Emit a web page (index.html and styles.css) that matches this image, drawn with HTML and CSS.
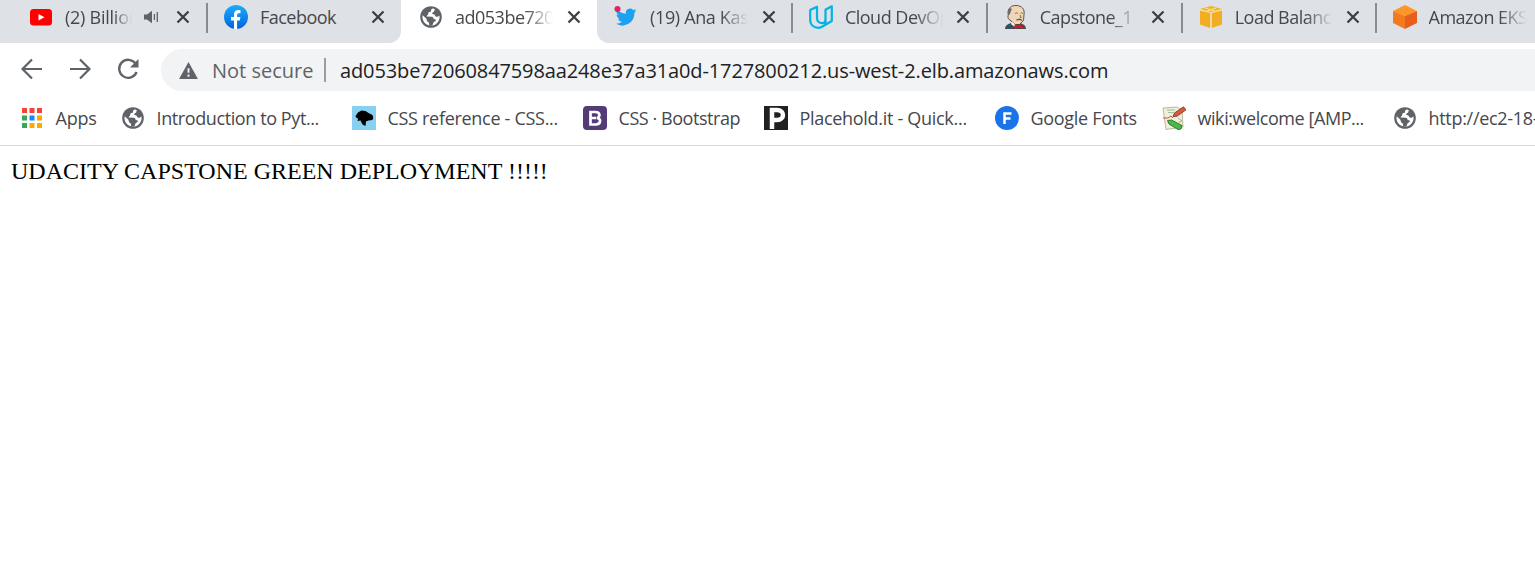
FILE: index.html
```html
<!DOCTYPE html>
<html lang="en">
<head>
<meta charset="utf-8">
<title>Udacity Capstone</title>
<link rel="stylesheet" href="styles.css">
</head>
<body>
<svg class="defs" width="0" height="0" aria-hidden="true">
  <symbol id="x" viewBox="0 0 14 14"><path d="M1.500 1.500l11 11M12.500 1.500l-11 11" fill="none" stroke="#3c4043" stroke-width="2.300"/></symbol>
  <symbol id="globe" viewBox="0 0 24 24"><circle cx="12" cy="12" r="10.800" fill="#5f6368"/><path d="M13.500 3.600c-1 .5-1.700 1.200-1.500 2.300-.2 1.500-1.800 1-2.500 1.700-.5.800.1 1.600-.7 2.300-.7.500-1.300.8-1.200 1.700l5.200.1c1.500.2 1.400 1.800 2.200 2.300.8.300 1.800.1 1.800 1.100 0 1.500-1.600 1.500-2.300 2.300-.6.900-.3 2.400-1.700 3-1 .4-2.200.2-2.700.1v-2.300c0-1.100-1.200-1-1.900-1.900-.7-1-.3-2.200-1.200-3L3.600 10.300C2.700 15.700 6.600 20.600 12 20.600c4.800 0 8.600-3.800 8.600-8.600 0-.6-.1-1.100-.2-1.600-1 .9-2.300 1.700-3.600 1-.9-.5-.7-1.500-1.500-1.900-.8-.3-2-.1-2.100-1.200-.1-1.200 1.300-1.200 1.900-1.900.6-.8.300-1.500.8-2.200-.6-.3-1.500-.5-2.400-.6z" fill="#fff"/></symbol>
</svg>
<header>
  <div class="tabstrip">
    <div class="group before">
      <div class="tab first"><svg class="icon" viewBox="0 0 24 24"><rect x="1" y="4" width="22" height="16.500" rx="3.500" fill="#f00"/><path d="M9.500 9v6.500l6-3.250z" fill="#fff"/></svg><span class="title short t1">(2) Billion</span><svg class="audio" viewBox="0 0 16 14"><path d="M1 4.500h3L9 .8v12.400L4 9.500H1z" fill="#5f6368"/><path d="M11.400 4v6M14.300 2v10" stroke="#5f6368" stroke-width="1.300"/></svg><svg class="close"><use href="#x"/></svg></div>
      <div class="tab split"><svg class="icon" viewBox="0 0 24 24"><defs><linearGradient id="fb" x2="0" y2="1"><stop stop-color="#19afff"/><stop offset="1" stop-color="#0062e0"/></linearGradient></defs><circle cx="12" cy="12" r="12" fill="url(#fb)"/><path d="M10 24v-8.500H7V12h3V9.500C10 6.400 11.800 5 14.400 5c1 0 2.100.2 2.100.2v3H15c-1.500 0-1.900.9-1.900 1.800v2h3.300l-.6 3.500h-2.700V24z" fill="#fff"/></svg><span class="title t2">Facebook</span><svg class="close"><use href="#x"/></svg></div>
    </div>
    <div class="tab active"><svg class="icon" viewBox="0 0 24 24"><use href="#globe"/></svg><span class="title t3">ad053be720</span><svg class="close"><use href="#x"/></svg></div>
    <div class="group after">
      <div class="tab"><svg class="icon" viewBox="0 0 24 24"><path d="M22.500 5.500c-.8.400-1.600.6-2.400.7.900-.5 1.500-1.300 1.800-2.300-.8.500-1.700.8-2.700 1a4.300 4.300 0 0 0-7.300 3.900C8.400 8.600 5.300 6.900 3.200 4.300a4.300 4.300 0 0 0 1.300 5.700c-.7 0-1.400-.2-1.900-.5 0 2 1.500 3.800 3.400 4.200-.6.200-1.300.2-1.900.1.500 1.700 2.100 2.900 4 3-1.800 1.300-4 2-6.300 1.800a12.100 12.100 0 0 0 18.600-10.800c.8-.6 1.500-1.400 2.100-2.300z" fill="#1da1f2"/><circle cx="3.500" cy="4" r="3" fill="#e0245e"/></svg><span class="title t4">(19) Ana Kas</span><svg class="close"><use href="#x"/></svg></div>
      <div class="tab split"><svg class="icon" viewBox="0 0 24 24"><path d="M8 1.800 1.200 5v9.500C1.200 20 5 22.800 9.500 22.800c1.500 0 2.600-.6 3.500-1L22.800 16V1.300l-6.300 3.500V14c0 3-1.500 4.200-3.500 4.200-2.600 0-5-2-5-5.200zM16.500 14v5" fill="none" stroke="#02b3e4" stroke-width="2.200" stroke-linejoin="round"/></svg><span class="title t5">Cloud DevOp</span><svg class="close"><use href="#x"/></svg></div>
      <div class="tab split"><svg class="icon" viewBox="0 0 24 24"><path d="M1 24c0-3 2-5 6-6l9 0c4 1 6 3 6 6z" fill="#335061"/><path d="M5 8C4 3 7 .500 12 .500c6 0 9 4 8 9l-.5 6-4 4H11l-5-4.500c-2.500-1-2.500-4-1-7z" fill="#f0d6b7" stroke="#39352f" stroke-width=".8"/><path d="M6 3C3.500 4 3 7 4 10l1.500-.5c1.500-1.500 1-4 2.500-5.500z" fill="#6d6b6d"/><path d="M11 8.500q2-1.500 3 0m2.500 0q1-1.500 2.500 0M16 10l1.200 2.500-1.700.5" fill="none" stroke="#6b5344" stroke-width=".8"/><path d="M12.500 15.300c2-1.500 4-1 5.500.2" fill="none" stroke="#5c5750" stroke-width="1.300"/><path d="m8 17 4 3-1 2-4-3z" fill="#fff"/><path d="M10.500 19l4 1.500 4-1.500v5l-4-1.500-4 1.500z" fill="#d51920"/></svg><span class="title t6">Capstone_1 #</span><svg class="close"><use href="#x"/></svg></div>
      <div class="tab split"><svg class="icon" viewBox="0 0 24 24"><path d="M1 4 12 1l11 3-11 4z" fill="#f4b21b"/><path d="M1 5.500 11.300 8v15L1 19.500zM23 5.500 12.700 8v15L23 19.500z" fill="#f0ae20"/><path d="M1 4.700 12 7.500l11-2.800M12 7.500V23M6 3l10 3M17 3 8 6" fill="none" stroke="#fbe2a0"/></svg><span class="title t7">Load Balance</span><svg class="close"><use href="#x"/></svg></div>
      <div class="tab split last"><svg class="icon" viewBox="0 0 24 24"><path d="m0 6 12-6 12 6-12 5z" fill="#ff9526"/><path d="m0 6 12 5v13L0 18z" fill="#f47a20"/><path d="M24 6v12l-12 6V11z" fill="#e85e1c"/></svg><span class="title t8">Amazon EKS</span></div>
    </div>
  </div>
  <div class="toolbar">
    <svg class="nav" viewBox="0 0 24 24"><path d="M22 12H3M12 2.500 2.500 12l9.500 9.500" fill="none" stroke="#5f6368" stroke-width="2.200"/></svg>
    <svg class="nav" viewBox="0 0 24 24"><path d="M2 12h19M12 2.500l9.500 9.500-9.500 9.500" fill="none" stroke="#5f6368" stroke-width="2.200"/></svg>
    <svg class="nav" viewBox="0 0 24 24"><path d="M19.500 6.500A9 9 0 1 0 20.600 15" fill="none" stroke="#5f6368" stroke-width="2.300"/><path d="M22.500 2v8.500H14z" fill="#5f6368"/></svg>
    <div class="omnibox">
      <svg class="warn" viewBox="0 0 20 18"><path d="M10 0l10 18H0z" fill="#5f6368"/><path d="M10 6.500v5M10 13.200v2.300" stroke="#f1f3f4" stroke-width="2"/></svg>
      <span class="insecure">Not secure</span><i class="divider"></i><span class="url">ad053be72060847598aa248e37a31a0d-1727800212.us-west-2.elb.amazonaws.com</span>
    </div>
  </div>
  <nav class="bookmarks">
    <a class="apps"><svg class="icon" viewBox="0 0 24 24"><path d="M2 2h5v5H2zM9.500 2h5v5h-5zM17 2h5v5h-5z" fill="#f44336"/><path d="M2 9.500h5v5H2zM2 17h5v5H2z" fill="#34a853"/><path d="M9.500 9.500h5v5h-5z" fill="#1a84ff"/><path d="M17 9.500h5v5h-5zM9.500 17h5v5h-5zM17 17h5v5h-5z" fill="#fbab00"/></svg><span class="b1">Apps</span></a>
    <a><svg class="icon"><use href="#globe"/></svg><span class="b2">Introduction to Pyt...</span></a>
    <a><svg class="icon" viewBox="0 0 24 24"><path fill="#88d0f0" d="M0 0h24v24H0z"/><path d="M3.500 10 6 6.500 9.500 4.500l4 .5 3 2 4 2 .8 3-1 2-3.800.5-2.500 1-.5 4.500-3-1.500-2-4-3 .5.500-2.500-2-1z"/></svg><span class="b3">CSS reference - CSS...</span></a>
    <a class="mid"><svg class="icon" viewBox="0 0 24 24"><rect width="24" height="24" rx="4" fill="#533b78"/><path d="M7.500 6h5c5 0 5 5.500 1.200 5.800 5 .4 4.300 6.700-1 6.700H7.500zM8 12h5" fill="none" stroke="#fff" stroke-width="2.700"/></svg><span class="b4">CSS · Bootstrap</span></a>
    <a><svg class="icon" viewBox="0 0 24 24"><path fill="#202020" d="M0 0h24v24H0z"/><path d="M8 23V4h5c8 0 8 10 0 10H8" fill="none" stroke="#fff" stroke-width="4.500"/></svg><span class="b5">Placehold.it - Quick...</span></a>
    <a class="fonts"><svg class="icon" viewBox="0 0 24 24"><circle cx="12" cy="12" r="12" fill="#1a73e8"/><path d="M9.500 18V7.500h7M9.500 12.500h6" fill="none" stroke="#fff" stroke-width="2.500"/></svg><span class="b6">Google Fonts</span></a>
    <a><svg class="icon" viewBox="0 0 24 24"><path d="m1 2 14-1 5 3 1 17-17 2.500z" fill="#f1efd9" stroke="#aaa98f" stroke-width=".8"/><path d="M5 4h8M6 6.500h6M16 12l4 3-3 1M17 17l4-4" fill="none" stroke="#9cbf9c"/><path d="M1 12h5l3-2 2 2" fill="none" stroke="#f03e3e"/><path d="M11 10.500 12.500 7 21.500.8l2.500 3-9 6.500z" fill="#d45b40" stroke="#83291b" stroke-width=".8"/><path d="m5.500 14.500 4-.5 10.500 5.500-1 3.500-3 .5-9-5.500z" fill="#4eb748" stroke="#1c7c25" stroke-width=".9"/></svg><span class="b7">wiki:welcome [AMP...</span></a>
    <a><svg class="icon"><use href="#globe"/></svg><span class="b8">http://ec2-18-</span></a>
  </nav>
</header>
<main>UDACITY CAPSTONE GREEN DEPLOYMENT !!!!!</main>
</body>
</html>
```
FILE: styles.css
```css
* { box-sizing: border-box; }
body { margin: 0; background: #fff; overflow: hidden; font-family: "Open Sans", "Noto Sans", sans-serif; }
svg { display: block; flex: none; }
.defs { position: absolute; }
.icon { width: 24px; height: 24px; }
.tabstrip { display: flex; height: 43px; overflow: hidden; }
.group { display: flex; flex: none; height: 43px; background: #dee1e6; }
.before { width: 401px; padding-left: 12px; border-bottom-right-radius: 12px; }
.after { width: 938px; overflow: hidden; border-bottom-left-radius: 12px; }
.tab { display: flex; flex: none; width: 194.9px; height: 34px; padding-left: 17px; align-items: center; position: relative; }
.active { width: 196px; padding-left: 18px; }
.last { margin-left: -1px; }
.split::before { content: ""; position: absolute; left: -1px; top: 3px; width: 2px; height: 30px; background: #898b90; }
.title { width: 98px; margin-left: 12px; overflow: hidden; white-space: nowrap; font-size: 18px; line-height: 28px; letter-spacing: -0.5px; color: #45484c; -webkit-mask-image: linear-gradient(90deg, #000 72%, transparent); mask-image: linear-gradient(90deg, #000 72%, transparent); }
.t2 { -webkit-mask-image: none; mask-image: none; }
.t4 { letter-spacing: -0.35px; }
.short { width: 67px; letter-spacing: -0.25px; }
.audio { width: 16px; height: 14px; margin-left: 11px; }
.close { width: 14px; height: 14px; margin-left: 13.5px; }
.audio + .close { margin-left: 17px; }
.toolbar { display: flex; height: 54px; padding: 6px 0 6px 20px; }
.nav { width: 24px; height: 24px; margin: 8px 24px 0 0; }
.omnibox { display: flex; flex: none; width: 1400px; height: 42px; margin-left: -3px; padding-left: 18px; border-radius: 21px; background: #f1f3f4; align-items: center; white-space: nowrap; font-size: 20px; color: #202124; }
.warn { width: 19px; height: 17px; }
.insecure { width: 101px; margin-left: 14px; color: #5f6368; }
.url { letter-spacing: -0.12px; }
.divider { width: 2px; height: 24px; margin: 0 14px 0 11px; background: #999ca0; }
.bookmarks { display: flex; height: 49px; padding: 9px 0 0 20px; border-bottom: 1px solid #d9dadc; overflow: hidden; }
.bookmarks a { display: flex; flex: none; width: 231px; height: 24px; align-items: center; gap: 11.5px; white-space: nowrap; font-size: 18px; line-height: 24px; color: #45484c; }
.bookmarks .apps { width: 101px; }
.bookmarks .mid { width: 181px; }
.bookmarks .fonts { width: 167px; }
.bookmarks span { margin-top: -1px; letter-spacing: -0.3px; }
.bookmarks .b1 { letter-spacing: -0.2px; }
.bookmarks .b2 { letter-spacing: -0.4px; }
.bookmarks .b4 { letter-spacing: -0.44px; }
.bookmarks .b7 { letter-spacing: -0.44px; }
main { padding: 11px 11px 0; font: 24px/28px "Liberation Serif", serif; color: #000; }
```
